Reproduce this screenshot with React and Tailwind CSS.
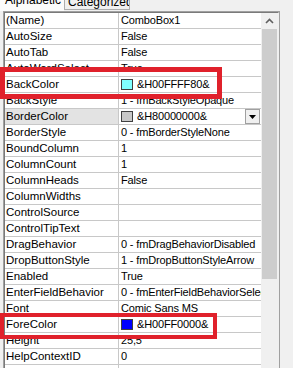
import React from "react";

const rows = [
  ["(Name)", "ComboBox1"],
  ["AutoSize", "False"],
  ["AutoTab", "False"],
  ["AutoWordSelect", "True"],
  ["BackColor", "&H00FFFF80&", "#80ffff"],
  ["BackStyle", "1 - fmBackStyleOpaque"],
  ["BorderColor", "&H80000000&", "#c8c8c8", true],
  ["BorderStyle", "0 - fmBorderStyleNone"],
  ["BoundColumn", "1"],
  ["ColumnCount", "1"],
  ["ColumnHeads", "False"],
  ["ColumnWidths", ""],
  ["ControlSource", ""],
  ["ControlTipText", ""],
  ["DragBehavior", "0 - fmDragBehaviorDisabled"],
  ["DropButtonStyle", "1 - fmDropButtonStyleArrow"],
  ["Enabled", "True"],
  ["EnterFieldBehavior", "0 - fmEnterFieldBehaviorSelectAll"],
  ["Font", "Comic Sans MS"],
  ["ForeColor", "&H00FF0000&", "#0000ff"],
  ["Height", "25,5"],
  ["HelpContextID", "0"],
  ["HideSelection", "True"],
];

function Row({ name, value, swatch, selected }) {
  return (
    <div className="flex h-[16px] border-b border-[#c8c8c8]">
      <div
        className={`w-[114px] shrink-0 pl-[1px] border-r border-[#c8c8c8] leading-[15px] whitespace-nowrap overflow-hidden ${
          selected ? "bg-[#e3e3e3]" : "bg-white"
        }`}
      >
        {name}
      </div>
      <div className="flex-1 flex items-center bg-white pl-[2px] whitespace-nowrap overflow-hidden relative text-[11px] tracking-[-0.15px]">
        {swatch && (
          <span
            className="w-[12px] h-[11px] border border-[#404040] mr-[4px] shrink-0"
            style={{ background: swatch }}
          />
        )}
        <span className="leading-[15px]">{value}</span>
        {selected && (
          <span className="absolute right-[1px] top-[0px] w-[15px] h-[15px] bg-[#f0f0f0] border border-[#a0a0a0] flex items-center justify-center">
            <svg width="7" height="4" viewBox="0 0 7 4">
              <path d="M0 0h7L3.5 4z" fill="#000" />
            </svg>
          </span>
        )}
      </div>
    </div>
  );
}

export default function App() {
  return (
    <div
      className="w-[293px] h-[368px] bg-[#f0f0f0] relative overflow-hidden text-[11.5px] text-black"
      style={{ fontFamily: "Tahoma, 'Liberation Sans', Arial, sans-serif" }}
    >
      {/* tabs */}
      <div className="flex h-[11px] relative">
        <div className="w-[64px] h-[11px] bg-[#fbfbfb] relative overflow-hidden">
          <span className="absolute left-[5px] top-[-7px] leading-[15px] text-[12px]">Alphabetic</span>
        </div>
        <div className="w-[66px] h-[10px] bg-[#f0f0f0] border-l border-r border-b border-[#adadad] relative overflow-hidden">
          <span className="absolute left-[3px] top-[-5px] leading-[15px] text-[12px]">Categorized</span>
        </div>
      </div>
      {/* grid frame */}
      <div className="ml-[3px] w-[277px] border border-[#a0a0a0] bg-[#f0f0f0]">
        <div className="border border-[#7a7a7a] border-r-[#f0f0f0] border-b-[#f0f0f0] flex h-[360px]">
          <div className="flex-1 overflow-hidden">
            {rows.map(([n, v, s, sel]) => (
              <Row key={n} name={n} value={v} swatch={s} selected={sel} />
            ))}
          </div>
          <div className="w-[17px] shrink-0 bg-[#f0f0f0] flex flex-col">
            <div className="h-[16px] flex items-center justify-center">
              <svg width="9" height="6" viewBox="0 0 9 6">
                <path d="M1 5L4.5 1.5L8 5" stroke="#606060" strokeWidth="1.6" fill="none" />
              </svg>
            </div>
            <div className="mx-[1px] h-[250px] bg-[#cdcdcd]" />
          </div>
        </div>
      </div>
      {/* highlight boxes */}
      <div className="absolute left-0 top-[67px] w-[222px] h-[32px] border-[5px] border-[#e0212b]" />
      <div className="absolute left-0 top-[313px] w-[217px] h-[26px] border-[4px] border-[#e0212b]" />
    </div>
  );
}
